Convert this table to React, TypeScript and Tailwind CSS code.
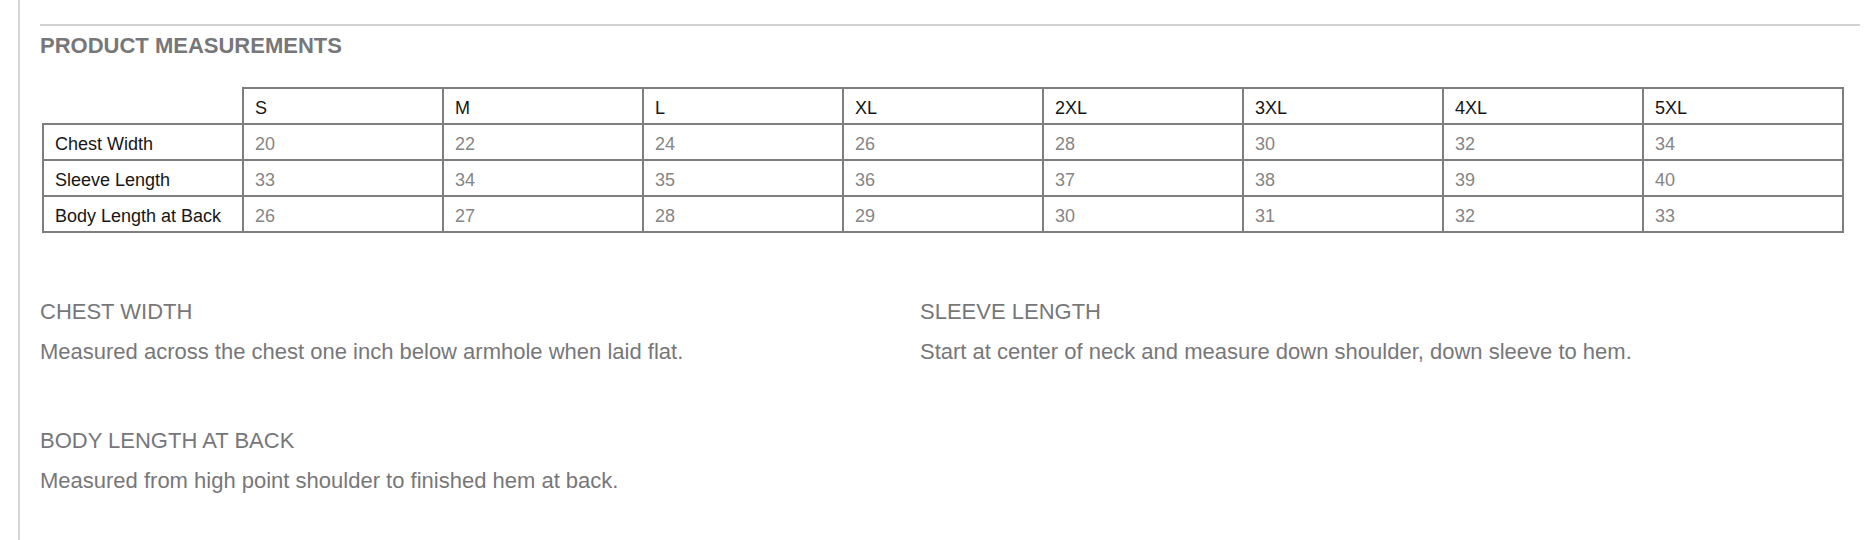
import React from "react";

const sizes = ["S", "M", "L", "XL", "2XL", "3XL", "4XL", "5XL"];
const rows: { label: string; values: number[] }[] = [
  { label: "Chest Width", values: [20, 22, 24, 26, 28, 30, 32, 34] },
  { label: "Sleeve Length", values: [33, 34, 35, 36, 37, 38, 39, 40] },
  { label: "Body Length at Back", values: [26, 27, 28, 29, 30, 31, 32, 33] },
];

const notes = [
  { title: "CHEST WIDTH", text: "Measured across the chest one inch below armhole when laid flat." },
  { title: "SLEEVE LENGTH", text: "Start at center of neck and measure down shoulder, down sleeve to hem." },
  { title: "BODY LENGTH AT BACK", text: "Measured from high point shoulder to finished hem at back." },
];

export default function App() {
  return (
    <div
      className="min-h-[540px] w-[1868px] bg-white"
      style={{ fontFamily: '"Liberation Sans", Arial, Helvetica, sans-serif' }}
    >
      <div className="ml-[18px] min-h-[540px] border-l-2 border-[#d4d4d4] pl-[20px] pr-[8px] pt-[24px]">
        <div className="h-[2px] w-full bg-[#d2d2d2]" />
        <h2 className="mt-[7px] text-[22px] font-bold leading-[26px] text-[#77777a]">
          PRODUCT MEASUREMENTS
        </h2>

        <div className="ml-[2px] mt-[28px] grid w-[1802px] grid-cols-[repeat(9,200px)] border-b-2 border-r-2 border-[#7e7e7e] text-[18px] leading-[24px]">
          <div className="h-[36px]" />
          {sizes.map((s) => (
            <div
              key={s}
              className="h-[36px] border-l-2 border-t-2 border-[#7e7e7e] pl-[11px] pt-[7px] text-[#161616]"
            >
              {s}
            </div>
          ))}
          {rows.map((r) => (
            <React.Fragment key={r.label}>
              <div className="h-[36px] border-l-2 border-t-2 border-[#7e7e7e] pl-[11px] pt-[7px] text-[#161616]">
                {r.label}
              </div>
              {r.values.map((v, i) => (
                <div
                  key={i}
                  className="h-[36px] border-l-2 border-t-2 border-[#7e7e7e] pl-[11px] pt-[7px] text-[#858585]"
                >
                  {v}
                </div>
              ))}
            </React.Fragment>
          ))}
        </div>

        <div className="mt-[66px] grid grid-cols-[880px_880px] gap-y-[63px] text-[22px] leading-[26px] text-[#77777a]">
          {notes.map((n) => (
            <div key={n.title} className="flex flex-col gap-[14px]">
              <div>{n.title}</div>
              <div>{n.text}</div>
            </div>
          ))}
        </div>
      </div>
    </div>
  );
}
